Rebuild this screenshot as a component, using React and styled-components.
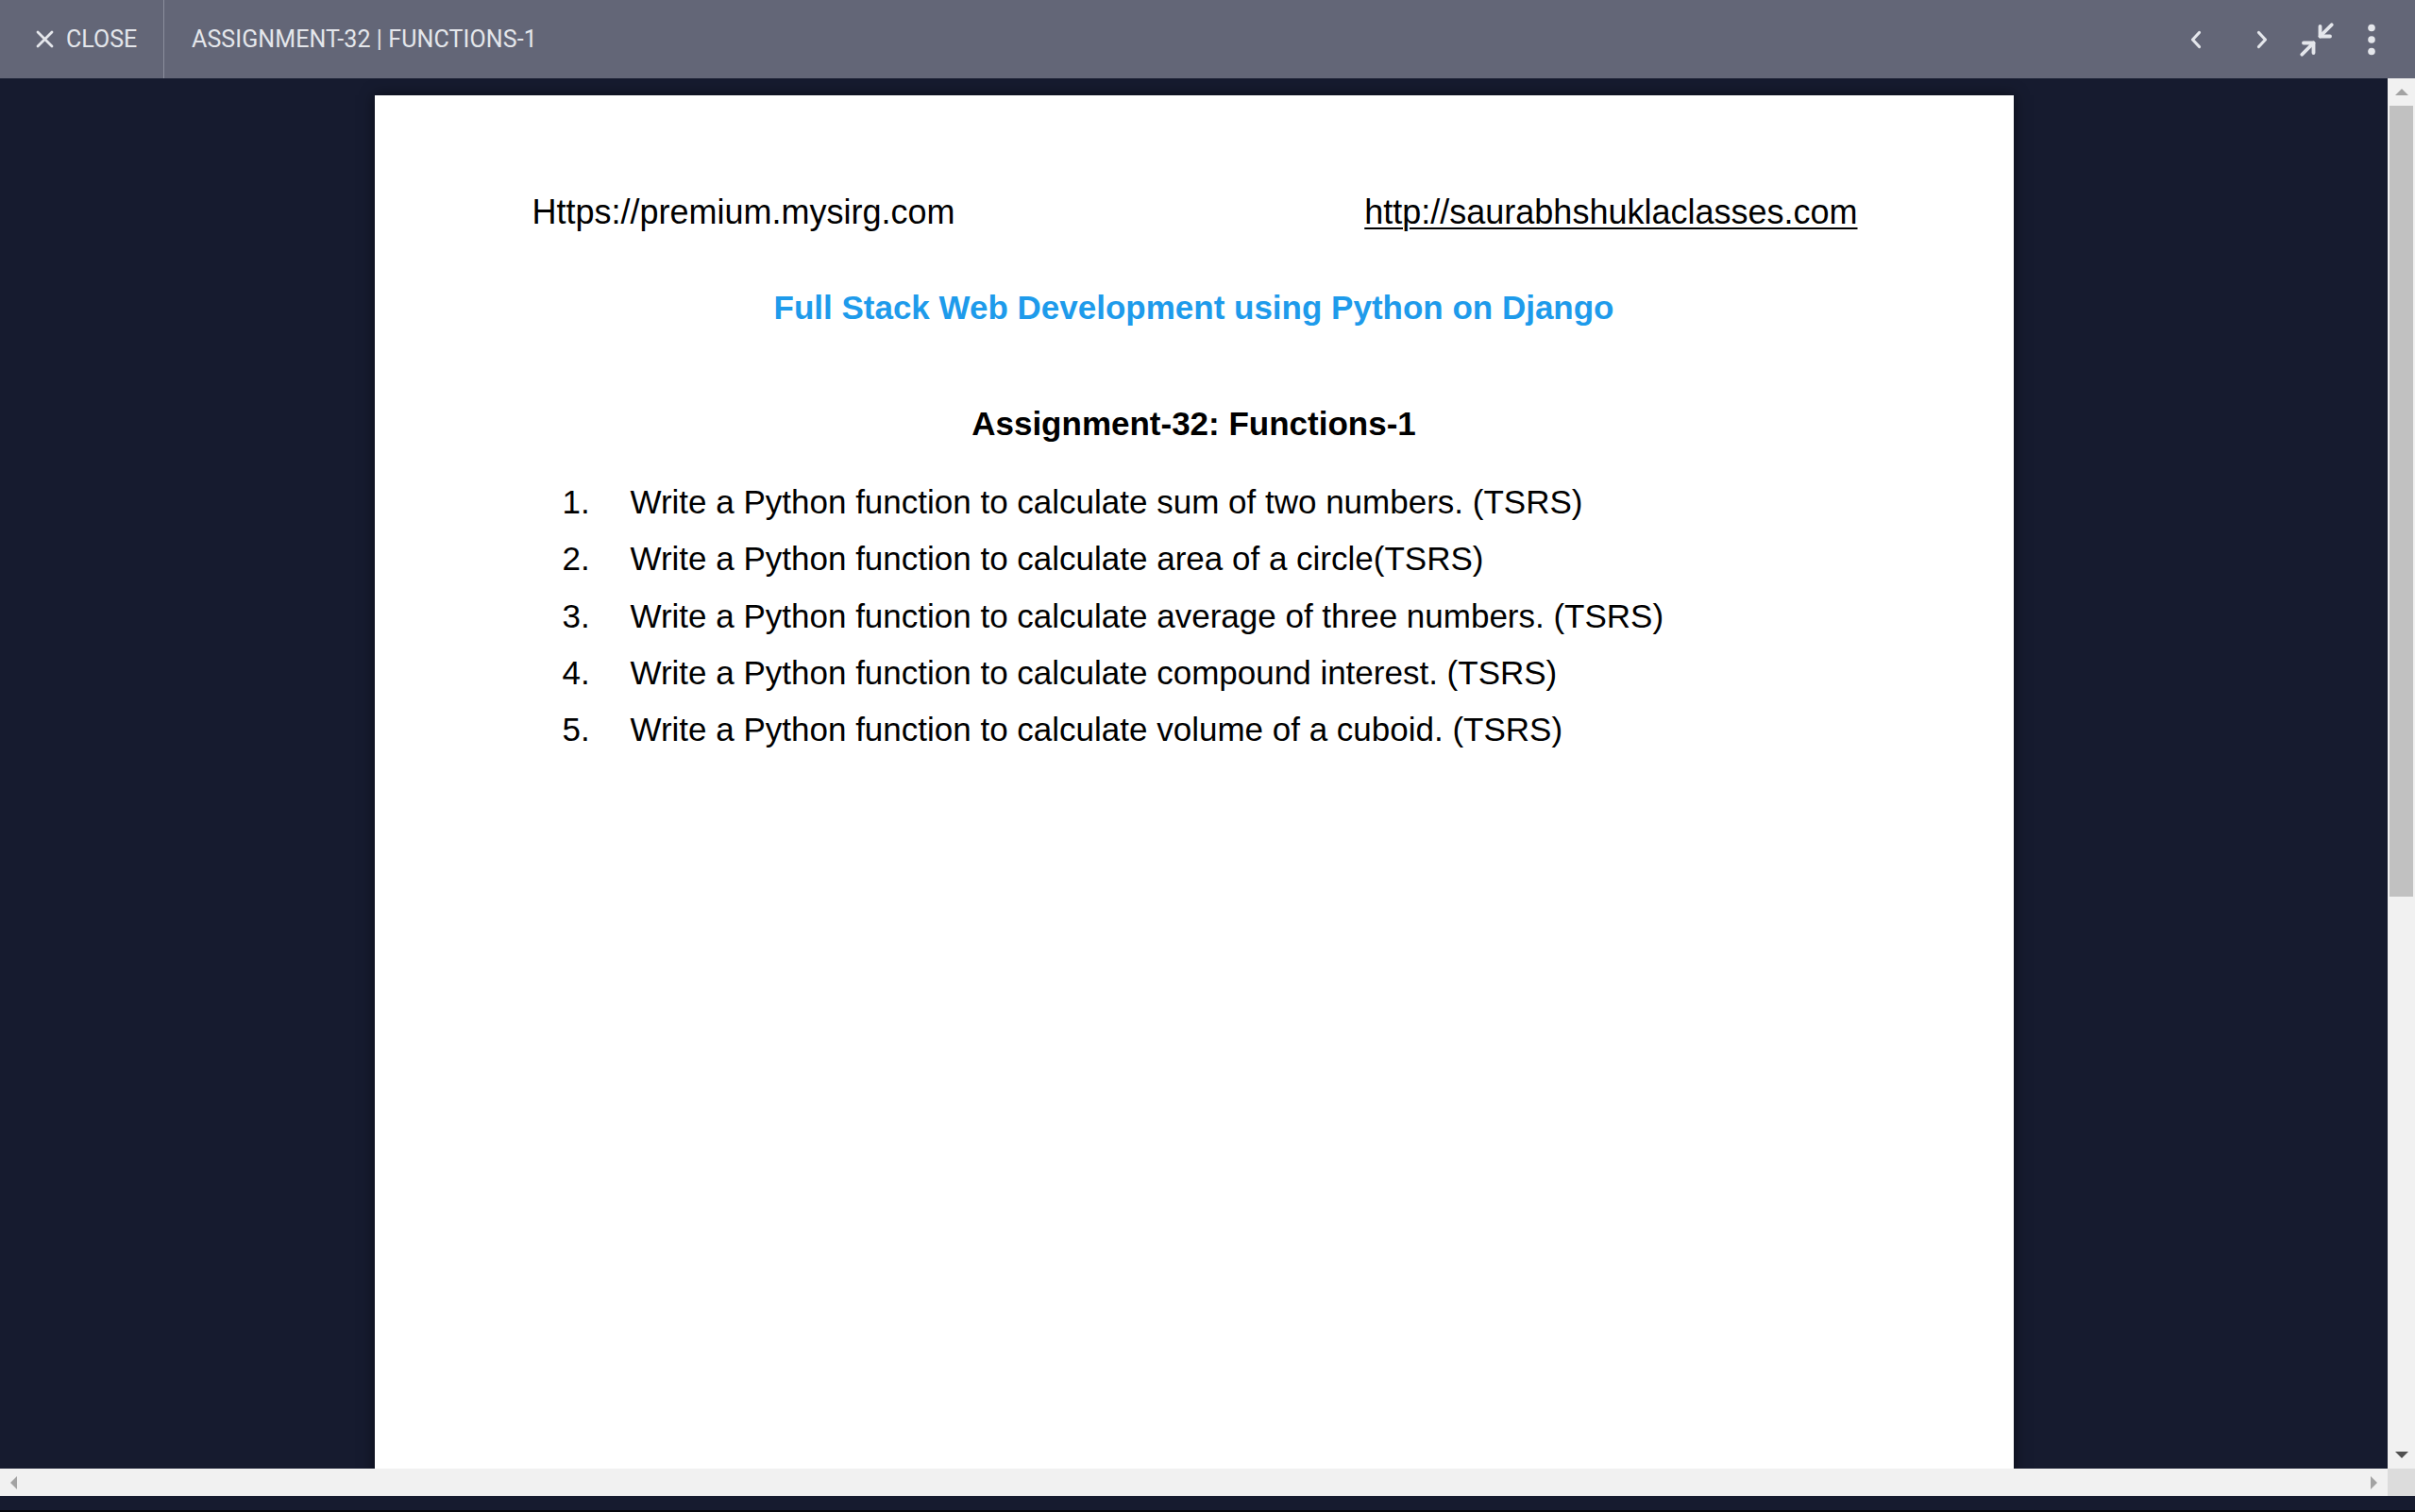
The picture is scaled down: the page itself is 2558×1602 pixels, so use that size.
import React from 'react';
import styled, { createGlobalStyle } from 'styled-components';
import { Minimize2 } from 'lucide-react';

const GlobalStyle = createGlobalStyle`
  html, body {
    margin: 0;
    padding: 0;
    background: #161b2f;
    overflow: hidden;
  }
  #root {
    width: 2558px;
    height: 1602px;
  }
`;

const Screen = styled.div`
  width: 2558px;
  height: 1602px;
  box-sizing: border-box;
  display: flex;
  flex-direction: column;
  background: #161b2f;
  border-bottom: 2px solid #04060c;
`;

const TopBar = styled.header`
  height: 83px;
  flex-shrink: 0;
  display: flex;
  align-items: center;
  background: #636677;
  color: #e4e6eb;
  font-family: Roboto, "Noto Sans", sans-serif;
  font-size: 25px;
`;

const CloseButton = styled.div`
  width: 174px;
  height: 100%;
  box-sizing: border-box;
  display: flex;
  align-items: center;
  gap: 13px;
  padding-left: 38px;
  border-right: 1px solid #8b8e9c;
`;

const Title = styled.div`
  padding-left: 29px;
  flex: 1;
  letter-spacing: 0.1px;
`;

const Actions = styled.div`
  display: flex;
  align-items: center;
  gap: 10px;
  padding-right: 22px;
`;

const IconButton = styled.div`
  width: 48px;
  height: 48px;
  display: flex;
  align-items: center;
  justify-content: center;
  margin-right: ${(p) => p.$extra || 0}px;
  color: #e4e6eb;
`;

const Body = styled.div`
  flex: 1 1 auto;
  height: 1473px;
  display: flex;
  min-height: 0;
`;

const Viewport = styled.main`
  flex: 1;
  overflow: hidden;
  display: flex;
  justify-content: center;
  padding-top: 18px;
`;

const Page = styled.article`
  width: 1736px;
  height: 1600px;
  flex-shrink: 0;
  box-sizing: border-box;
  background: #ffffff;
  box-shadow: 0 0 14px rgba(0, 0, 0, 0.55);
  padding-top: 104px;
  font-family: "Liberation Sans", Arial, sans-serif;
  color: #000;
`;

const LinkRow = styled.div`
  display: flex;
  justify-content: space-between;
  padding: 0 165px 0 167px;
  font-size: 36px;
  line-height: 40px;
`;

const Url = styled.span`
  text-decoration: ${(p) => (p.$underline ? 'underline' : 'none')};
  text-decoration-thickness: 2px;
  text-underline-offset: 4px;
`;

const CourseTitle = styled.h1`
  margin: 61px 0 0;
  text-align: center;
  font-size: 35px;
  line-height: 40px;
  font-weight: 700;
  color: #1e9beb;
`;

const AssignmentTitle = styled.h2`
  margin: 83px 0 0;
  text-align: center;
  font-size: 35px;
  line-height: 40px;
  font-weight: 700;
`;

const TaskList = styled.ol`
  list-style: none;
  margin: 33px 0 0;
  padding: 0 0 0 199px;
`;

const Task = styled.li`
  display: grid;
  grid-template-columns: 72px 1fr;
  font-size: 35px;
  line-height: 60.3px;
`;

const VScroll = styled.div`
  width: 29px;
  flex-shrink: 0;
  display: flex;
  flex-direction: column;
  background: #f1f1f1;
`;

const ScrollButton = styled.div`
  width: 29px;
  height: 29px;
  flex-shrink: 0;
  display: flex;
  align-items: center;
  justify-content: center;
`;

const Arrow = styled.span`
  width: 0;
  height: 0;
  ${(p) =>
    p.$dir === 'up'
      ? `border-left: 7px solid transparent; border-right: 7px solid transparent; border-bottom: 7px solid ${p.$color};`
      : p.$dir === 'down'
      ? `border-left: 7px solid transparent; border-right: 7px solid transparent; border-top: 7px solid ${p.$color};`
      : p.$dir === 'left'
      ? `border-top: 7px solid transparent; border-bottom: 7px solid transparent; border-right: 7px solid ${p.$color};`
      : `border-top: 7px solid transparent; border-bottom: 7px solid transparent; border-left: 7px solid ${p.$color};`}
`;

const VTrack = styled.div`
  flex: 1;
  padding: 0 2px;
`;

const VThumb = styled.div`
  height: 838px;
  background: #c1c1c1;
`;

const HScroll = styled.div`
  height: 29px;
  flex-shrink: 0;
  display: flex;
  background: #f1f1f1;
`;

const HTrack = styled.div`
  flex: 1;
`;

const Corner = styled.div`
  width: 29px;
  background: #dcdcdc;
`;

const BottomStrip = styled.div`
  height: 15px;
  flex-shrink: 0;
  background: #161b2f;
`;

const CloseIcon = () => (
  <svg width="19" height="19" viewBox="0 0 19 19">
    <path d="M2 2 L17 17 M17 2 L2 17" stroke="currentColor" strokeWidth="2.8" strokeLinecap="round" />
  </svg>
);

const Chevron = ({ dir }) => (
  <svg width="16" height="24" viewBox="0 0 16 24">
    <path
      d={dir === 'left' ? 'M11.5 4.5 L4.5 12 L11.5 19.5' : 'M4.5 4.5 L11.5 12 L4.5 19.5'}
      fill="none"
      stroke="currentColor"
      strokeWidth="3.2"
      strokeLinecap="round"
      strokeLinejoin="round"
    />
  </svg>
);

const Kebab = () => (
  <svg width="10" height="34" viewBox="0 0 10 34">
    <circle cx="5" cy="4.5" r="3.8" fill="currentColor" />
    <circle cx="5" cy="17" r="3.8" fill="currentColor" />
    <circle cx="5" cy="29.5" r="3.8" fill="currentColor" />
  </svg>
);

const tasks = [
  'Write a Python function to calculate sum of two numbers. (TSRS)',
  'Write a Python function to calculate area of a circle(TSRS)',
  'Write a Python function to calculate average of three numbers. (TSRS)',
  'Write a Python function to calculate compound interest. (TSRS)',
  'Write a Python function to calculate volume of a cuboid. (TSRS)',
];

export default function App() {
  return (
    <>
      <GlobalStyle />
      <Screen>
        <TopBar>
          <CloseButton>
            <CloseIcon />
            <span>CLOSE</span>
          </CloseButton>
          <Title>ASSIGNMENT-32 | FUNCTIONS-1</Title>
          <Actions>
            <IconButton $extra={12}>
              <Chevron dir="left" />
            </IconButton>
            <IconButton>
              <Chevron dir="right" />
            </IconButton>
            <IconButton>
              <Minimize2 size={42} strokeWidth={2.2} />
            </IconButton>
            <IconButton>
              <Kebab />
            </IconButton>
          </Actions>
        </TopBar>
        <Body>
          <Viewport>
            <Page>
              <LinkRow>
                <Url>Https://premium.mysirg.com</Url>
                <Url $underline>http://saurabhshuklaclasses.com</Url>
              </LinkRow>
              <CourseTitle>Full Stack Web Development using Python on Django</CourseTitle>
              <AssignmentTitle>Assignment-32: Functions-1</AssignmentTitle>
              <TaskList>
                {tasks.map((t, i) => (
                  <Task key={i}>
                    <span>{i + 1}.</span>
                    <span>{t}</span>
                  </Task>
                ))}
              </TaskList>
            </Page>
          </Viewport>
          <VScroll>
            <ScrollButton>
              <Arrow $dir="up" $color="#a3a3a3" />
            </ScrollButton>
            <VTrack>
              <VThumb />
            </VTrack>
            <ScrollButton>
              <Arrow $dir="down" $color="#505050" />
            </ScrollButton>
          </VScroll>
        </Body>
        <HScroll>
          <ScrollButton>
            <Arrow $dir="left" $color="#a3a3a3" />
          </ScrollButton>
          <HTrack />
          <ScrollButton>
            <Arrow $dir="right" $color="#a3a3a3" />
          </ScrollButton>
          <Corner />
        </HScroll>
        <BottomStrip />
      </Screen>
    </>
  );
}
